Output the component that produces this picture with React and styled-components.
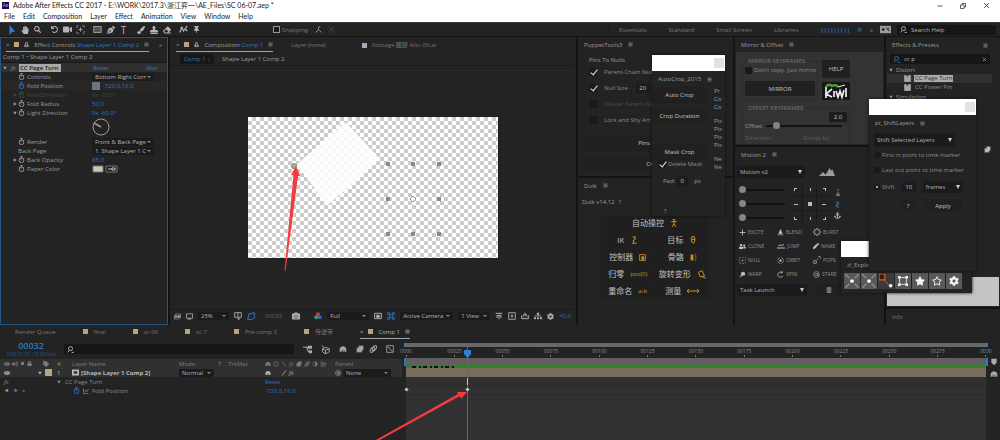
import React from 'react'
import styled, { createGlobalStyle } from 'styled-components'
import {
    FaHandPaper, FaSearch, FaUndo, FaVideo, FaPenNib, FaPaintBrush, FaStamp, FaEraser, FaThumbtack,
    FaCamera, FaCog, FaStar, FaRegStar, FaAnchor, FaTrashAlt, FaEye, FaVolumeUp, FaLock, FaUnlockAlt,
    FaTag, FaSitemap, FaUserFriends, FaPen, FaRegImages, FaDesktop,
} from 'react-icons/fa'

const GlobalStyle = createGlobalStyle`
    * { box-sizing: border-box; }
    body {
        margin: 0;
        background: #141414;
        color: #9c9c9c;
        font: 6px/8px "Open Sans", "Noto Sans CJK SC", sans-serif;
        overflow: hidden;
    }
    button, input, select { font: inherit; color: inherit; margin: 0; padding: 0; border: 0; background: none; border-radius: 0; }
    svg { display: block; flex: none; }
`

const Page = styled.div`
    position: relative;
    display: flex;
    flex-direction: column;
    min-height: 100vh;
`

/* title + menu */
const TopBar = styled.header`
    background: #fff;
    color: #222;
    display: grid;
    grid-template-columns: 1fr auto;
    height: 22px;
    font: 7px/11px Lato, "Noto Sans CJK SC", sans-serif;
`
const TitleText = styled.div`
    display: flex;
    align-items: center;
    gap: 4px;
    padding-left: 2px;
    white-space: nowrap;
`
const AppMark = styled.span`
    width: 7px;
    height: 7px;
    background: #1f0740;
    color: #b49aff;
    font-size: 5px;
    line-height: 6px;
    text-align: center;
`
const MenuBar = styled.nav`
    display: flex;
    gap: 8px;
    padding-left: 4px;
`
const WindowButtons = styled.div`
    display: flex;
    gap: 17px;
    padding: 0 10px 0 0;
    align-items: center;
`
const PlainButton = styled.button`
    display: flex;
    align-items: center;
    justify-content: center;
`

/* toolbar */
const Toolbar = styled.div`
    display: flex;
    align-items: center;
    height: 14px;
    background: #232323;
    border-top: 1px solid #3c3c3c;
    padding: 0 4px 0 5px;
    gap: 4px;
`
const ToolGroup = styled.div`
    display: flex;
`
const Tool = styled.button`
    width: 13px;
    height: 12px;
    display: flex;
    align-items: center;
    justify-content: center;
    color: ${p => p.$color || '#b4b4b4'};
    font-size: 10px;
`
const SnapLabel = styled.label`
    display: flex;
    align-items: center;
    gap: 2px;
    margin-left: 66px;
    color: #777;
`
const Workspaces = styled.nav`
    display: flex;
    align-items: center;
    gap: 22px;
    margin-left: auto;
    border-left: 1px solid #1a1a1a;
    padding-left: 10px;
    color: #777;
`
const SearchBox = styled.label`
    display: flex;
    align-items: center;
    gap: 4px;
    background: #161616;
    height: 10px;
    padding: 0 3px;
    flex: ${p => p.$fixed ? 'none' : 1};
    width: ${p => p.$w ? p.$w + 'px' : 'auto'};
    margin: ${p => p.$m || 0};
    color: #b8b8b8;
    input { flex: 1; min-width: 0; }
    input::placeholder { color: #b8b8b8; opacity: 1; }
`

/* panels */
const Workspace = styled.main`
    display: grid;
    grid-template-columns: 168px 1fr 155px 149px 114px;
    gap: 2px;
    height: 287px;
    padding-top: 1px;
`
const Column = styled.div`
    display: flex;
    flex-direction: column;
    gap: 2px;
    min-width: 0;
`
const Panel = styled.section`
    background: #232323;
    border: 1px solid ${p => p.$active ? '#24557f' : '#232323'};
    display: flex;
    flex-direction: column;
    min-width: 0;
    overflow: hidden;
    flex: ${p => p.$h ? 'none' : 1};
    height: ${p => p.$h ? p.$h + 'px' : 'auto'};
`
const PanelHead = styled.div`
    display: flex;
    flex: none;
    align-items: center;
    justify-content: space-between;
    height: 14px;
    padding: 0 5px;
    white-space: nowrap;
`
const Tab = styled.div`
    display: flex;
    align-items: center;
    gap: ${p => p.$gap || 6}px;
    height: 14px;
    color: ${p => p.$color || '#9c9c9c'};
    border-bottom: 1px solid ${p => p.$on ? '#a0a0a0' : 'transparent'};
`
const Blue = styled.span`
    color: ${p => p.$dim ? '#1d4a78' : '#2c78c4'};
`
const Grey = styled.span`
    color: #a0a0a0;
`
const Swatch = styled.i`
    width: ${p => p.$s || 5}px;
    height: ${p => p.$s || 5}px;
    background: ${p => p.$c || '#b8a483'};
    flex: none;
`
const Select = styled.select`
    appearance: none;
    background: #1b1b1b;
    color: #b4b4b4;
    height: ${p => p.$h || 8}px;
    padding: 0 8px 0 3px;
    width: 100%;
    min-width: 0;
`
const SelectBox = styled.span`
    position: relative;
    display: flex;
    align-items: center;
    width: ${p => p.$w}px;
    &::after {
        content: '';
        position: absolute;
        right: 3px;
        border: 2px solid transparent;
        border-top: ${p => p.$solid ? '4px solid #ccc' : '2px solid #888'};
        border-bottom: 0;
    }
`
const Tick = styled.input`
    appearance: none;
    position: relative;
    flex: none;
    width: ${p => p.$s || 8}px;
    height: ${p => p.$s || 8}px;
    background: #191919;
    border: ${p => p.$line ? '1px solid #999' : '0'};
    border-radius: ${p => p.type === 'radio' ? '50%' : '0'};
    &[type='checkbox']:checked::after {
        content: '';
        position: absolute;
        left: 3px;
        top: 0;
        width: 3px;
        height: 6px;
        border: solid #e4e4e4;
        border-width: 0 1px 1px 0;
        transform: rotate(38deg);
    }
    &[type='radio']:checked::after {
        content: '';
        position: absolute;
        inset: 2px;
        background: #ddd;
        border-radius: 50%;
    }
`
const Range = styled.input`
    appearance: none;
    width: ${p => p.$w}px;
    height: 8px;
    &::-webkit-slider-runnable-track { height: 2px; background: #131313; }
    &::-webkit-slider-thumb {
        appearance: none;
        width: 7px;
        height: 7px;
        margin-top: -3px;
        border-radius: 50%;
        background: #858585;
    }
`
const FlatButton = styled.button`
    background: ${p => p.$bg || '#202020'};
    color: #c4c4c4;
    height: ${p => p.$h || 14}px;
    width: ${p => p.$w ? p.$w + 'px' : 'auto'};
    display: flex;
    align-items: center;
    justify-content: center;
    gap: 6px;
    white-space: nowrap;
`

/* effect controls */
const Crumb = styled.div`
    height: 11px;
    padding: 1px 2px;
    border-bottom: 1px solid #191919;
`
const EffectHead = styled.div`
    display: grid;
    grid-template-columns: 8px 8px 74px 1fr auto;
    align-items: center;
    height: 9px;
    background: #303030;
    padding: 0 10px 0 2px;
`
const EffectName = styled.b`
    background: #a8a8a8;
    color: #222;
    font-weight: 600;
    width: 42px;
    padding: 0 1px;
    line-height: 8px;
    white-space: nowrap;
`
const PropRow = styled.div`
    display: grid;
    grid-template-columns: 17px 9px 65px 1fr;
    align-items: center;
    height: ${p => p.$tall ? 20 : 9}px;
    color: ${p => p.$dim ? '#484848' : '#9c9c9c'};
    background: ${p => p.$warm ? '#2a2623' : 'none'};
`
const ArrowCell = styled.span`
    display: flex;
    justify-content: flex-end;
    padding-right: 1px;
`
const PropLabel = styled.span`
    white-space: nowrap;
    grid-column: ${p => p.$wide ? 'span 2' : 'auto'};
`
const Values = styled.span`
    display: flex;
    align-items: center;
    gap: 3px;
    color: ${p => p.$dim ? '#484848' : '#2c78c4'};
`

/* composition view */
const CompPath = styled.div`
    display: flex;
    flex: none;
    align-items: center;
    height: 14px;
    padding-left: 9px;
    gap: 8px;
    border-bottom: 1px solid #1a1a1a;
    white-space: nowrap;
`
const PathChip = styled.span`
    background: #171717;
    color: #2c78c4;
    width: 34px;
    padding: 1px 4px;
    display: flex;
    justify-content: space-between;
`
const Viewer = styled.div`
    flex: 1;
    display: flex;
    align-items: center;
    justify-content: center;
`
const Checker = styled.div`
    width: 250px;
    height: 141px;
    background: repeating-conic-gradient(#cbcbcb 0 25%, #fff 0 50%) 0 0 / 8px 8px;
`
const ViewBar = styled.div`
    display: flex;
    flex: none;
    align-items: center;
    gap: 5px;
    height: 15px;
    padding: 0 3px 2px;
    border-top: 1px solid #1a1a1a;
    color: #b0b0b0;
    white-space: nowrap;
`

/* script panels */
const Stack = styled.div`
    display: flex;
    flex-direction: column;
    gap: ${p => p.$gap || 0}px;
    padding: ${p => p.$pad || 0};
`
const Row = styled.div`
    display: flex;
    align-items: center;
    justify-content: ${p => p.$end ? 'flex-end' : 'flex-start'};
    gap: ${p => p.$gap || 0}px;
    height: ${p => p.$h ? p.$h + 'px' : 'auto'};
    padding: ${p => p.$pad || 0};
    color: ${p => p.$color || 'inherit'};
    white-space: nowrap;
`
const CheckRow = styled.label`
    display: flex;
    align-items: center;
    gap: ${p => p.$gap || 7}px;
    height: ${p => p.$h || 16}px;
    color: ${p => p.$dim ? '#4c4c4c' : '#8c8c8c'};
    white-space: nowrap;
`
const NumberField = styled.input`
    width: ${p => p.$w || 14}px;
    height: 10px;
    background: #1c1c1c;
    color: #c4c4c4;
    text-align: center;
`
const DuikGrid = styled.div`
    display: grid;
    grid-template-columns: 1fr 1fr;
    width: 108px;
    margin: 5px 0 0 22px;
    gap: 1px;
    background: #212121;
    button:first-child { grid-column: span 2; }
`
const DuikButton = styled.button`
    display: flex;
    align-items: center;
    justify-content: center;
    gap: 6px;
    height: 16px;
    background: #1f1f1f;
    color: #c0c0c0;
    font-size: 8px;
    svg, i { color: #c98a1c; font-style: normal; font-size: 6px; }
`
const MirrorBody = styled.div`
    background: #333;
    flex: 1;
    display: grid;
    grid-template-columns: 76px 28px;
    gap: 4px 4px;
    align-content: start;
    padding: 5px 6px 0;
`
const Group = styled.fieldset`
    border: 1px solid #2c2c2c;
    margin: 0;
    padding: 0 2px 2px;
    min-width: 0;
    grid-column: ${p => p.$wide ? 'span 2' : 'auto'};
    legend { padding: 0 2px; margin-left: 1px; color: #777; }
`
const AnchorGrid = styled.div`
    display: grid;
    grid-template-columns: repeat(3, 13px);
    grid-auto-rows: 13px;
    gap: 1px;
    background: #1a1a1a;
    button { background: #232323; display: flex; align-items: center; justify-content: center; }
`
const MotionGrid = styled.div`
    display: grid;
    grid-template-columns: 38px 36px 36px;
    grid-auto-rows: 14px;
    padding: 1px 0 3px 3px;
`
const MotionButton = styled.button`
    display: flex;
    align-items: center;
    gap: 2px;
    color: #8f8f8f;
    font-size: 5px;
    svg { color: #c0c0c0; }
`

/* effects tree */
const TreeRow = styled.div`
    display: flex;
    align-items: center;
    gap: 3px;
    height: 9px;
    padding-left: ${p => p.$depth ? 17 : 2}px;
    margin-right: 7px;
    background: ${p => p.$on ? '#303030' : 'none'};
    mark { background: ${p => p.$on ? '#aaa' : 'none'}; color: ${p => p.$on ? '#333' : '#8c8c8c'}; padding: 0 1px; line-height: 7px; }
`
const LightBlock = styled.div`
    background: #c4c4c4;
    height: 29px;
    margin-top: auto;
`
const CornerNote = styled.div`
    align-self: flex-end;
    margin: 45px 8px 0 0;
    color: #bbb;
`

/* floating windows */
const Floating = styled.section`
    position: absolute;
    left: ${p => p.$x}px;
    top: ${p => p.$y}px;
    width: ${p => p.$w}px;
    height: ${p => p.$h}px;
    background: #232323;
    box-shadow: 0 0 3px #111;
    overflow: hidden;
`
const FloatTitle = styled.div`
    background: #fff;
    height: 16px;
    display: flex;
    justify-content: flex-end;
    align-items: center;
    padding-right: 1px;
`
const FloatClose = styled.button`
    width: 10px;
    height: 10px;
    background: #e2e2e2;
`
const AutoCropBody = styled.div`
    display: grid;
    grid-template-columns: 55px 1fr;
    gap: 4px;
`
const ExplodeTool = styled.button`
    width: 16px;
    height: 16px;
    display: flex;
    align-items: center;
    justify-content: center;
    background: ${p => p.$dark ? '#3b3b3b' : '#595959'};
    color: #f4f4f4;
`

/* timeline */
const Timeline = styled.section`
    flex: 1;
    margin-top: 2px;
    background: #232323;
    display: flex;
    flex-direction: column;
`
const TimelineTabs = styled.div`
    display: flex;
    align-items: center;
    height: 14px;
    padding-left: 15px;
    gap: 27px;
    color: #777;
    white-space: nowrap;
`
const TimelineBody = styled.div`
    flex: 1;
    display: grid;
    grid-template-columns: 402px 1fr;
`
const TimelineTools = styled.div`
    display: flex;
    align-items: center;
    height: 20px;
    color: #a8a8a8;
    gap: 9px;
    padding-right: 8px;
`
const TimeCode = styled.div`
    width: 55px;
    padding-left: 7px;
    text-align: center;
    color: #2c78c4;
    font-weight: 600;
    font-size: 9px;
    line-height: 10px;
    small { display: block; font: 5px/6px Roboto, sans-serif; color: #1f5080; white-space: nowrap; }
`
const LayerTable = styled.table`
    width: 100%;
    table-layout: fixed;
    border-collapse: collapse;
    td, th { padding: 0; height: 9px; line-height: 8px; text-align: left; font-weight: 400; white-space: nowrap; overflow: hidden; }
    th { background: #303030; color: #7d7d7d; }
`
const LayerRow = styled.tr`
    background: ${p => p.$on ? '#303030' : 'none'};
    color: ${p => p.$on ? '#b8b8b8' : '#8c8c8c'};
`
const Tracks = styled.div`
    position: relative;
    margin: 4px 14px 0 4px;
    background: #313131;
    display: flex;
    flex-direction: column;
`
const Bar = styled.div`
    height: ${p => p.$h}px;
    background: ${p => p.$c};
    border-left: ${p => p.$grip ? '2px solid #2c78c4' : '0'};
    border-right: ${p => p.$grip ? '2px solid #2c78c4' : '0'};
    margin: ${p => p.$grip ? '0 -2px' : '0'};
    flex: none;
`
const Ruler = styled.div`
    display: flex;
    justify-content: space-between;
    height: 11px;
    background: #232323;
    color: #8c8c8c;
    font-size: 5px;
`
const Mark = styled.span`
    width: 0;
    display: flex;
    flex-direction: column;
    align-items: center;
    &::after { content: ''; width: 1px; height: 2px; background: #777; }
`
const TrackRow = styled.div`
    height: 9px;
    border-bottom: 1px solid #2b2b2b;
`
const Playhead = styled.div`
    position: absolute;
    left: 10.5%;
    top: 0;
    bottom: 0;
    width: 1px;
    background: #35779c;
    svg { position: absolute; left: -3px; top: 7px; }
    &::after { content: ''; position: absolute; left: 0; top: 35px; width: 1px; height: 7px; background: #b8c8d4; }
`
const Keyframe = styled.i`
    position: absolute;
    left: ${p => p.$at}%;
    top: 45px;
    width: 3px;
    height: 3px;
    margin-left: -1px;
    background: #c4c4c4;
    transform: rotate(45deg);
`
const EdgeIcons = styled.div`
    position: absolute;
    right: -12px;
    top: 15px;
    color: #aaa;
    display: flex;
    flex-direction: column;
    gap: 4px;
`
const Overlay = styled.svg`
    position: absolute;
    left: 0;
    top: 0;
    pointer-events: none;
`

const paths = {
    cursor: <path d="M3 0 L10 8 L6 8 L3 12 Z" fill="currentColor" />,
    pan: <g fill="none" stroke="currentColor"><path d="M1 4V1H4M8 1H11V4M11 8V11H8M4 11H1V8" strokeDasharray="2 1" /><path d="M6 3V9M3 6H9" /></g>,
    rect: <path d="M1 2H11V10H1Z" fill="#555" stroke="currentColor" />,
    roto: <path d="M1 10L4 3L6 8L11 1M8 5L11 8M4 3L2 4" fill="none" stroke="currentColor" strokeWidth="1.6" />,
    snap: <path d="M1 11L6 6L11 11M6 6V2M6 2L9 1" fill="none" stroke="currentColor" strokeWidth="1.3" />,
    cross: <path d="M1 1L4 4M11 1L8 4M1 11L4 8M11 11L8 8M4 6H8M6 4V8" fill="none" stroke="currentColor" strokeWidth="1.5" />,
    menu: <path d="M1 2.5H11M1 6H11M1 9.5H11" stroke="currentColor" strokeWidth="1.6" />,
    down: <path d="M1 2H11L6 11Z" fill="currentColor" />,
    right: <path d="M2 1V11L11 6Z" fill="currentColor" />,
    left: <path d="M10 1V11L1 6Z" fill="currentColor" />,
    watch: <g fill="none" stroke="currentColor" strokeWidth="1.5"><circle cx="6" cy="7.5" r="4" /><path d="M4 1H8M6 1V4M1.5 3L3 4.5M10.5 3L9 4.5M6 7.5L5 6" /></g>,
    mag: <g fill="none" stroke="currentColor" strokeWidth="1.5"><circle cx="6" cy="4.5" r="3.5" /><path d="M4 7.5L1 11M8 11H12" /></g>,
    close: <path d="M2 2L10 10M10 2L2 10" stroke="currentColor" strokeWidth="1.5" />,
    mini: <path d="M1 6H11" stroke="currentColor" strokeWidth="1.5" />,
    restore: <path d="M1 4H8V11H1ZM4 4V1H11V8H8" fill="none" stroke="currentColor" strokeWidth="1.4" />,
    preset: <path d="M1 1H4V3H8V1H11V11H1ZM3 6H5M7 6H9M3 8.5H9" fill="#999" stroke="#ccc" />,
    mask: <path d="M3 3L11 1V9L8 11H1Z" fill="none" stroke="currentColor" strokeWidth="1.5" />,
    grid: <path d="M1 1H11V8H8V11H6V1M1 8H6M1 1V8" fill="none" stroke="currentColor" strokeWidth="1.3" />,
    frame: <g fill="none" stroke="currentColor" strokeWidth="1.4"><path d="M1 2H11V10H1Z" /><path d="M4 5H8V8H4Z" fill="currentColor" /></g>,
    fast: <g fill="none" stroke="currentColor" strokeWidth="1.3"><path d="M1 1H11V11H1Z" /><path d="M7 3L4 6H8L5 9" /></g>,
    alpha: <path d="M1 1H4V4H8V1H11V4H8V8H11V11H8V8H4V11H1V8H4V4H1Z" fill="none" stroke="currentColor" strokeWidth="1.2" />,
    rgb: <g><circle cx="6" cy="3.5" r="3" fill="#c43a35" /><circle cx="3.5" cy="8" r="3" fill="#3f9f47" /><circle cx="8.5" cy="8" r="3" fill="#3c62c4" /></g>,
    pixel: <path d="M1 2H11M3 5H9M6 5V11M3 5V9M9 5V9" fill="none" stroke="currentColor" strokeWidth="1.5" />,
    tray: <path d="M1 5V10H11V5M4 7V4H8V7M6 4V1" fill="none" stroke="currentColor" strokeWidth="1.5" />,
    chart: <path d="M1 11H11M1 1V11M3 8L6 4L8 7L11 2" fill="none" stroke="currentColor" strokeWidth="1.4" />,
    flow: <g><path d="M0 3H5L7 9H9" fill="none" stroke="currentColor" strokeWidth="1.4" /><path d="M6 1H12V5H6ZM8 7H12V11H8Z" fill="currentColor" /></g>,
    cube: <path d="M6 3L11 5V9L6 12L2 9V5ZM2 5L6 7L11 5M6 7V12M1 1L4 3" fill="none" stroke="currentColor" strokeWidth="1.2" />,
    shy: <path d="M1 10V6Q2 2 6 2Q10 2 11 6V10H8V7H7V10H5V7H4V10Z" fill="currentColor" />,
    blend: <path d="M4 1H11V8H9V11H1V4H4Z" fill="currentColor" stroke="#555" />,
    blur: <g fill="none" stroke="currentColor" strokeWidth="1.5"><ellipse cx="5" cy="7" rx="2.5" ry="4.5" transform="rotate(35 5 7)" /><ellipse cx="8" cy="5" rx="2.5" ry="4.5" transform="rotate(35 8 5)" /></g>,
    graph: <path d="M1 1H11V11H1ZM2 3Q5 3 6 6Q7 9 10 9" fill="none" stroke="currentColor" strokeWidth="1.2" />,
    slash: <path d="M10 1L2 11" stroke="currentColor" strokeWidth="1.5" />,
    back: <path d="M2 1L10 11" stroke="currentColor" strokeWidth="1.5" />,
    half: <g><circle cx="6" cy="6" r="4.5" fill="none" stroke="currentColor" /><path d="M6 1.5A4.5 4.5 0 0 1 6 10.5Z" fill="currentColor" /></g>,
    dot: <circle cx="6" cy="6" r="4" fill="currentColor" />,
    spiral: <g fill="none" stroke="currentColor"><circle cx="6" cy="6" r="5" /><circle cx="6" cy="6" r="2" /><path d="M8 4V8H10" /></g>,
    comp: <path d="M0 1H12V11H0ZM3 4V8H9V4Z" fill="currentColor" fillRule="evenodd" />,
    sync: <g><path d="M0 2H12V10H0Z" fill="currentColor" /><circle cx="3.5" cy="6" r="1.5" fill="#232323" /><path d="M7 4L10 8M9 4V6" stroke="#232323" /></g>,
    diamond: <path d="M6 1L11 6L6 11L1 6Z" fill="currentColor" />,
    mountains: <path d="M0 9L3 6L5 8L8 3L9 5L10 4L12 9Z" fill="currentColor" />,
    plus: <path d="M6 1V11M1 6H11" stroke="currentColor" strokeWidth="1.5" />,
    cone: <path d="M6 1L9 8H3ZM1 10H11" fill="currentColor" stroke="currentColor" />,
    burst: <path d="M6 0V3M6 9V12M0 6H3M9 6H12M2 2L4 4M10 2L8 4M2 10L4 8M10 10L8 8" stroke="currentColor" strokeWidth="1.6" />,
    jump: <path d="M0 9H12M2 6L5 4L7 6L10 3" fill="none" stroke="currentColor" strokeWidth="1.5" />,
    nul: <g fill="none" stroke="currentColor"><path d="M1 1H11V11H1Z" strokeDasharray="2 2.5" /><circle cx="6" cy="6" r="1" /></g>,
    orbit: <g fill="none" stroke="currentColor"><circle cx="6" cy="6" r="5" strokeDasharray="6 2" /><circle cx="6" cy="6" r="1.5" fill="currentColor" /></g>,
    pops: <path d="M1 7V11H5V7ZM8 1H11V4M6 6L8 4" fill="none" stroke="currentColor" />,
    warp: <path d="M1 11L4 6L3 3L9 1L11 7L6 8Z" fill="currentColor" />,
    spin: <path d="M9 3A4.5 4.5 0 1 0 10 8M9 0V3H6" fill="none" stroke="currentColor" strokeWidth="1.3" />,
    man: <path d="M6 1V7M2 4H10M6 7L3 12M6 7L9 12M4 1H8" fill="none" stroke="currentColor" strokeWidth="1.5" />,
    leg: <path d="M4 2Q9 0 8 4L5 7L6 11M3 11H10" fill="none" stroke="currentColor" strokeWidth="1.6" />,
    target: <path d="M4 1H8L9 6L7 11L4 9ZM4 5H9" fill="none" stroke="currentColor" strokeWidth="1.5" />,
    control: <g><path d="M1 1H11V11H1Z" fill="none" stroke="currentColor" strokeWidth="1.5" /><path d="M4 4H9V10H4Z" fill="currentColor" /></g>,
    bone: <g><path d="M1 1H6V11H1Z" fill="currentColor" /><path d="M8 1H10V11H8" fill="none" stroke="currentColor" /></g>,
    morph: <path d="M2 3L7 1L10 8L4 9ZM7 9L12 11" fill="none" stroke="currentColor" strokeWidth="1.3" />,
    ruler: <path d="M0 6H12M2 4L0 6L2 8M10 4L12 6L10 8" fill="none" stroke="currentColor" />,
    flask: <path d="M4 1H8M6 1V5L9 10H3L6 5" fill="#777" stroke="#777" />,
    link: <path d="M4 1L8 4L4 8L8 11" fill="none" stroke="#2c8ac4" strokeWidth="1.8" />,
    explode: <g stroke="#8c8c8c" strokeWidth="1"><path d="M1 1L4 4M11 1L8 4M1 11L4 8M11 11L8 8" /><circle cx="6" cy="6" r="1.4" fill="#fff" stroke="none" /></g>,
    explodeBox: <g><path d="M0 0H5V5H0Z" fill="#3a1c08" stroke="#d26a1c" /><path d="M5 6L9 10" stroke="#888" strokeWidth="0.7" /><circle cx="10" cy="10" r="1.5" fill="#fff" /></g>,
    bounds: <g fill="currentColor"><path d="M2 2H10V10H2Z" fill="none" stroke="currentColor" /><path d="M0 0H3V3H0ZM9 0H12V3H9ZM0 9H3V12H0ZM9 9H12V12H9Z" /></g>,
    marker: <path d="M2 1H10V7L6 11L2 7Z" fill="currentColor" />,
}

function Glyph({ name, size = 7 }) {
    return <svg width={size} height={size} viewBox="0 0 12 12">{paths[name]}</svg>
}

function Drop({ label, value, w, h, solid }) {
    return (
        <SelectBox $w={w} $solid={solid}>
            <Select aria-label={label} defaultValue={value} $h={h}><option>{value}</option></Select>
        </SelectBox>
    )
}

function EffectProp({ label, arrow, watch = true, blue, dim, warm, tall, children }) {
    const Tint = blue ? Blue : dim ? 'span' : Grey
    return (
        <PropRow $dim={dim} $warm={warm} $tall={tall}>
            <ArrowCell>{arrow && <Glyph name={arrow} size={4} />}</ArrowCell>
            {watch && <Tint>{label && <Glyph name="watch" />}</Tint>}
            <PropLabel $wide={!watch}>{label}</PropLabel>
            <Values $dim={dim}>{children}</Values>
        </PropRow>
    )
}

function EffectControls() {
    return (
        <Panel $active>
            <PanelHead>
                <Tab $on $gap={5}>
                    <span>×</span><Swatch /><FaUnlockAlt size={5} />
                    <span>Effect Controls <Blue>Shape Layer 1 Comp 2</Blue></span>
                    <Glyph name="menu" size={5} />
                </Tab>
                <span>»</span>
            </PanelHead>
            <Crumb>Comp 1 • Shape Layer 1 Comp 2</Crumb>
            <EffectHead>
                <Glyph name="down" size={4} /><i>fx</i><EffectName>CC Page Turn</EffectName>
                <Blue>Reset</Blue><Blue>Abo</Blue>
            </EffectHead>
            <EffectProp label="Controls"><Drop label="Controls" value="Bottom Right Corner" w={62} /></EffectProp>
            <EffectProp label="Fold Position" blue warm>
                <Swatch $s={8} $c="#6c7580" /><span>-720.0,16.0</span>
            </EffectProp>
            <EffectProp label="Fold Direction" arrow="right" dim>0x -13.0°</EffectProp>
            <EffectProp label="Fold Radius" arrow="right">50.0</EffectProp>
            <EffectProp label="Light Direction" arrow="down">0x -60.0°</EffectProp>
            <EffectProp tall>
                <svg width="18" height="18" viewBox="0 0 18 18" fill="none" stroke="#9c9c9c">
                    <circle cx="9" cy="9" r="8" /><path d="M9 9L2 5" strokeWidth="1.5" />
                </svg>
            </EffectProp>
            <EffectProp label="Render"><Drop label="Render" value="Front & Back Page" w={62} /></EffectProp>
            <EffectProp label="Back Page" watch={false}><Drop label="Back Page" value="1. Shape Layer 1 Comp 2" w={62} /></EffectProp>
            <EffectProp label="Back Opacity" arrow="right">85.0</EffectProp>
            <EffectProp label="Paper Color">
                <svg width="26" height="8" viewBox="0 0 26 8">
                    <path d="M1 1H11V7H1Z" fill="#c8c8b4" stroke="#777" />
                    <path d="M14 1H25V7H14Z" fill="#1c1c1c" stroke="#777" /><path d="M16 4H20M20 3H23V5H20Z" stroke="#ccc" />
                </svg>
            </EffectProp>
        </Panel>
    )
}

function Composition() {
    return (
        <Panel>
            <PanelHead>
                <Row $gap={18}>
                    <Tab $on $gap={5}>
                        <span>×</span><Swatch /><FaUnlockAlt size={5} />
                        <span>Composition <Blue>Comp 1</Blue></span><Glyph name="menu" size={5} />
                    </Tab>
                    <Tab $color="#777">Layer (none)</Tab>
                    <Row $pad="0 0 0 18px" $gap={5} $color="#777"><Swatch $c="#aaa8bc" />Footage 图层 4/sc-06.ai</Row>
                </Row>
            </PanelHead>
            <CompPath><PathChip>Comp 1 <span>‹</span></PathChip><span>Shape Layer 1 Comp 2</span></CompPath>
            <Viewer>
                <Checker>
                    <svg width="250" height="141" viewBox="0 0 250 141">
                        <path d="M98 5L132 42L79 89L49 47Z" fill="#fff" opacity="0.88" />
                        <circle cx="46" cy="49" r="2.5" fill="#b5ab9c" stroke="#8d8578" />
                        {[47, 82, 117].map(y => [140, 165, 191].map(x => (
                            x === 165 && y === 82
                                ? <path key={x} d="M165 79L168 82L165 85L162 82Z" fill="#fff" stroke="#989878" />
                                : <rect key={x} x={x - 2} y={y - 2} width="4" height="4" fill="#8c8c70" />
                        )))}
                    </svg>
                </Checker>
            </Viewer>
            <ViewBar>
                <FaRegImages size={7} /><FaDesktop size={7} /><Drop label="Zoom" value="25%" w={31} />
                <Glyph name="grid" size={8} /><Blue><Glyph name="mask" size={8} /></Blue>
                <Row $pad="0 5px" $color="#666">00032</Row>
                <FaCamera size={8} /><Row $pad="0 0 0 9px"><Glyph name="rgb" size={8} /></Row>
                <Drop label="Resolution" value="Full" w={42} />
                <Glyph name="frame" size={8} /><Blue><Glyph name="alpha" size={8} /></Blue>
                <Drop label="View camera" value="Active Camera" w={53} />
                <Drop label="View layout" value="1 View" w={32} />
                <Glyph name="pixel" size={8} /><Glyph name="fast" size={8} /><Glyph name="tray" size={8} />
                <FaSitemap size={8} /><FaCog size={7} /><Blue>+0.0</Blue>
            </ViewBar>
        </Panel>
    )
}

function SimpleHead({ title }) {
    return (
        <PanelHead>
            <Tab>{title}<Glyph name="menu" size={5} /></Tab>
        </PanelHead>
    )
}

const duik = [
    ['自动操控', <Glyph name="man" size={8} />],
    ['IK', <Glyph name="leg" size={8} />], ['目标', <Glyph name="target" size={8} />],
    ['控制器', <Glyph name="control" size={7} />], ['骨骼', <Glyph name="bone" size={7} />],
    ['归零', <i>pos(0)</i>], ['旋转变形', <Glyph name="morph" size={9} />],
    ['重命名', <i>a›b</i>], ['测量', <Glyph name="ruler" size={12} />],
]

function Puppet() {
    return (
        <Column>
            <Panel $h={139}>
                <SimpleHead title="PuppetTools3" />
                <Stack $pad="4px 5px 0 10px">
                    <span>Pins To Nulls</span>
                    <Stack>
                        <CheckRow><Tick type="checkbox" defaultChecked />Parent-Chain Nulls</CheckRow>
                        <Row $gap={8}>
                            <CheckRow><Tick type="checkbox" defaultChecked />Null Size</CheckRow>
                            <NumberField aria-label="Null size" defaultValue="20" />
                        </Row>
                        <CheckRow $dim><Tick type="checkbox" />Master Parent Null</CheckRow>
                        <CheckRow><Tick type="checkbox" />Lock and Shy Art</CheckRow>
                    </Stack>
                </Stack>
                <Stack $gap={5} $pad="7px 5px 0">
                    <FlatButton $h={16}>Pins to Nulls</FlatButton>
                    <FlatButton $h={16}>Create</FlatButton>
                </Stack>
            </Panel>
            <Panel>
                <SimpleHead title="Duik" />
                <Row $pad="5px 3px 4px" $gap={4}><span>Duik v14.12</span><button>?</button></Row>
                <DuikGrid>
                    {duik.map(([label, icon]) => <DuikButton key={label}>{label}{icon}</DuikButton>)}
                </DuikGrid>
            </Panel>
        </Column>
    )
}

const motionButtons = [
    ['EXCITE', <Glyph name="plus" />], ['BLEND', <Glyph name="cone" />], ['BURST', <Glyph name="burst" size={8} />],
    ['CLONE', <FaUserFriends size={7} />], ['JUMP', <Glyph name="jump" size={8} />], ['NAME', <FaPen size={6} />],
    ['NULL', <Glyph name="nul" />], ['ORBIT', <Glyph name="orbit" />], ['POPS', <Glyph name="pops" size={8} />],
    ['WARP', <Glyph name="warp" />], ['SPIN', <Glyph name="spin" />], ['STARE', <Glyph name="spiral" />],
]
const anchors = ['M2 5V2H5V3H3V5Z', 'M4 2H5V5H4Z', 'M3 2H6V5H5V3H3Z', 'M2 4H6V5H2Z', 'M2 2H6V6H2Z', 'M2 4H6V5H2Z', 'M2 3H3V5H5V6H2Z', 'M4 3H5V6H4Z', 'M5 3H6V6H3V5H5Z']

function Mirror() {
    return (
        <Column>
            <Panel $h={108}>
                <SimpleHead title="Mirror & Offset" />
                <MirrorBody>
                    <Group>
                        <legend>MIRROR KEYFRAMES</legend>
                        <CheckRow $h={10} $gap={2}><Tick type="checkbox" $s={7} />Don't copy, just mirror</CheckRow>
                        <Stack $pad="6px 0 0"><FlatButton $h={15}>MIRROR</FlatButton></Stack>
                    </Group>
                    <Stack $gap={4} $pad="3px 0 0">
                        <FlatButton $h={18}>HELP</FlatButton>
                        <FlatButton $h={18} $bg="#171717" aria-label="Kiwi">
                            <svg width="26" height="18" viewBox="0 0 26 18" fill="none" stroke="#eee" strokeWidth="1.7">
                                <path d="M3 5V16M9 7L3 12L9 15M11 9V15M13 9L15 15L17 9L19 15L21 8M23 6V15" />
                                <path d="M3 5Q6 1 9 4Q13 2 15 5" stroke="#4b9a33" strokeWidth="2.5" />
                                <path d="M15 5L22 3" strokeWidth="1" />
                            </svg>
                        </FlatButton>
                    </Stack>
                    <Group $wide>
                        <legend>OFFSET KEYFRAMES</legend>
                        <Row $end><NumberField aria-label="Offset value" defaultValue="2.0" $w={18} /></Row>
                        <Row as="label" $gap={4}>Offset <Range type="range" $w={76} min="0" max="20" defaultValue="2" /></Row>
                        <Row $gap={31} $pad="4px 0 0" $color="#606060"><span>Direction:</span><span>Group by:</span></Row>
                    </Group>
                </MirrorBody>
            </Panel>
            <Panel>
                <SimpleHead title="Motion 2" />
                <Row $gap={14} $pad="2px 1px 3px"><Drop label="Version" value="Motion v2" w={68} h={12} solid /><Glyph name="mountains" size={16} /></Row>
                <Row $gap={4} $pad="0 3px">
                    <Stack $gap={6}>
                        {[1, 2, 3].map(n => <Range key={n} aria-label={'Ease ' + n} type="range" $w={46} defaultValue="0" />)}
                    </Stack>
                    <AnchorGrid>
                        {anchors.map((d, n) => (
                            <button key={n} aria-label={'Anchor ' + n}>
                                <svg width="8" height="8" viewBox="0 0 8 8"><path d={d} fill="#bbb" /></svg>
                            </button>
                        ))}
                    </AnchorGrid>
                    <Stack $gap={4}><Glyph name="flask" size={8} /><Glyph name="link" size={7} /><FaAnchor size={7} color="#ccc" /></Stack>
                </Row>
                <MotionGrid>
                    {motionButtons.map(([label, icon]) => <MotionButton key={label}>{icon}{label}</MotionButton>)}
                </MotionGrid>
                <Row $gap={8} $pad="0 1px">
                    <Drop label="Task" value="Task Launch" w={70} h={12} solid />
                    <FlatButton aria-label="Delete" $w={28} $h={12}><FaTrashAlt size={6} color="#888" /></FlatButton>
                </Row>
            </Panel>
        </Column>
    )
}

function Effects() {
    return (
        <Column>
            <Panel $h={270}>
                <PanelHead><Tab>Effects & Presets</Tab><Row $pad="0 6px 0 0"><Glyph name="menu" size={5} /></Row></PanelHead>
                <SearchBox $m="2px 9px 1px 3px" $fixed>
                    <Blue><Glyph name="mag" /></Blue><input aria-label="Search effects" defaultValue="cc p" /><Glyph name="close" size={5} />
                </SearchBox>
                <TreeRow><Glyph name="down" size={4} />Distort</TreeRow>
                <TreeRow $depth $on><Glyph name="preset" /><mark>CC Page Turn</mark></TreeRow>
                <TreeRow $depth><Glyph name="preset" /><mark>CC Power Pin</mark></TreeRow>
                <TreeRow><Glyph name="down" size={4} />Simulation</TreeRow>
                <CornerNote><Glyph name="blend" /></CornerNote>
                <LightBlock />
            </Panel>
            <Panel><PanelHead><Tab $color="#777">Info</Tab></PanelHead></Panel>
        </Column>
    )
}

function Switches() {
    return (
        <Row $gap={2}>
            <Glyph name="shy" size={6} /><Glyph name="burst" size={6} /><Glyph name="back" size={6} /><i>fx</i>
            <Glyph name="blend" size={6} /><Glyph name="blur" size={6} /><Glyph name="half" size={6} /><Glyph name="cube" size={6} />
        </Row>
    )
}

const tabs = ['final', 'sc-06', 'sc 7', 'Pre-comp 3', '传送带']
const marks = ['0000', '00025', '00050', '00075', '00100', '00125', '00150', '00175', '00200', '00225', '00250', '00275', '0030']

function TimelinePanel() {
    return (
        <Timeline>
            <TimelineTabs>
                <span>Render Queue</span>
                {tabs.map(name => <Tab key={name} $color="#777"><Swatch />{name}</Tab>)}
                <Tab $on $gap={5} $color="#b0b0b0"><span>×</span><Swatch />Comp 1<Glyph name="menu" size={5} /></Tab>
            </TimelineTabs>
            <TimelineBody>
                <div>
                    <TimelineTools>
                        <TimeCode>00032<small>0:00:01:07 (25.00 fps)</small></TimeCode>
                        <SearchBox><Glyph name="mag" /><input aria-label="Search layers" /></SearchBox>
                        <Glyph name="flow" size={9} /><Glyph name="cube" size={9} /><Glyph name="shy" size={8} />
                        <Row $gap={5}><Glyph name="blend" size={8} /><Glyph name="blur" size={8} /></Row>
                        <Glyph name="graph" size={8} />
                    </TimelineTools>
                    <LayerTable>
                        <colgroup>
                            <col width="38" /><col width="19" /><col width="15" /><col /><col width="39" /><col width="10" />
                            <col width="37" /><col width="70" /><col width="67" />
                        </colgroup>
                        <thead>
                            <tr>
                                <th><Row $gap={2} $pad="0 0 0 4px"><FaEye size={6} /><FaVolumeUp size={6} /><Glyph name="dot" size={5} /><FaLock size={5} /></Row></th>
                                <th><Row $pad="0 0 0 5px"><FaTag size={6} /></Row></th>
                                <th>#</th><th>Layer Name</th><th>Mode</th><th>T</th><th>TrkMat</th><th><Switches /></th><th>Parent</th>
                            </tr>
                        </thead>
                        <tbody>
                            <LayerRow $on>
                                <td><Row $pad="0 0 0 4px"><FaEye size={6} /></Row></td>
                                <td><Row $gap={3}><Glyph name="down" size={4} /><Swatch $s={7} /></Row></td>
                                <td>1</td>
                                <td><Row $gap={2}><Glyph name="comp" /><b>[Shape Layer 1 Comp 2]</b></Row></td>
                                <td><Drop label="Mode" value="Normal" w={35} /></td>
                                <td /><td />
                                <td><Row $gap={10}><Glyph name="shy" size={6} /><Row $gap={2}><Glyph name="slash" size={6} /><i>fx</i></Row></Row></td>
                                <td><Row $gap={2}><Glyph name="spiral" size={6} /><Drop label="Parent" value="None" w={48} /></Row></td>
                            </LayerRow>
                            <LayerRow>
                                <td><Row $pad="0 0 0 4px"><i>fx</i></Row></td><td />
                                <td colSpan={5}><Row $gap={4}><Glyph name="down" size={4} />CC Page Turn</Row></td>
                                <td><Blue>Reset</Blue></td><td><Blue $dim>...</Blue></td>
                            </LayerRow>
                            <LayerRow>
                                <td colSpan={3}>
                                    <Row $gap={4} $pad="0 0 0 4px"><Glyph name="left" size={5} /><Blue><Glyph name="diamond" size={5} /></Blue><Row $color="#555"><Glyph name="right" size={4} /></Row></Row>
                                </td>
                                <td colSpan={4}><Row $gap={3} $pad="0 0 0 1px"><Blue><Glyph name="watch" /></Blue><Glyph name="chart" size={6} />Fold Position</Row></td>
                                <td><Blue>-720.0,16.0</Blue></td><td />
                            </LayerRow>
                        </tbody>
                    </LayerTable>
                </div>
                <Tracks>
                    <Bar $h={4} $c="#686868" $grip />
                    <Ruler>{marks.map(m => <Mark key={m}>{m}</Mark>)}</Ruler>
                    <Bar $h={8} $c="#625e5e" $grip />
                    <svg width="100%" height="2"><rect width="100%" height="2" fill="#228b24" /><path d="M6 1H50" stroke="#111" strokeWidth="2" strokeDasharray="4 3 2 2" /></svg>
                    <Bar $h={9} $c="#786c5e" />
                    <TrackRow /><TrackRow />
                    <Playhead><svg width="7" height="8" viewBox="0 0 7 8"><path d="M0 0H7V4L3.5 8L0 4Z" fill="#2f7fd6" /></svg></Playhead>
                    <Keyframe $at={0} /><Keyframe $at={10.5} />
                    <EdgeIcons><Glyph name="marker" size={8} /><Glyph name="shy" size={8} /></EdgeIcons>
                </Tracks>
            </TimelineBody>
        </Timeline>
    )
}

export default function App() {
    return (
        <Page>
            <GlobalStyle />
            <TopBar>
                <TitleText><AppMark>Ae</AppMark>Adobe After Effects CC 2017 - E:\WORK\2017.3\浙江弈一\AE_Files\SC 06-07.aep *</TitleText>
                <WindowButtons>
                    <PlainButton aria-label="Minimize"><Glyph name="mini" size={6} /></PlainButton>
                    <PlainButton aria-label="Restore"><Glyph name="restore" size={6} /></PlainButton>
                    <PlainButton aria-label="Close"><Glyph name="close" size={7} /></PlainButton>
                </WindowButtons>
                <MenuBar>
                    {['File', 'Edit', 'Composition', 'Layer', 'Effect', 'Animation', 'View', 'Window', 'Help'].map(m => <PlainButton key={m}>{m}</PlainButton>)}
                </MenuBar>
            </TopBar>
            <Toolbar>
                <ToolGroup>
                    <Tool aria-label="Select" $color="#2f7fd6"><Glyph name="cursor" size={10} /></Tool>
                    <Tool aria-label="Hand"><FaHandPaper size={8} /></Tool>
                    <Tool aria-label="Zoom"><FaSearch size={7} /></Tool>
                </ToolGroup>
                <ToolGroup>
                    <Tool aria-label="Rotate"><FaUndo size={7} /></Tool>
                    <Tool aria-label="Camera"><FaVideo size={9} /></Tool>
                    <Tool aria-label="Pan behind"><Glyph name="pan" size={9} /></Tool>
                </ToolGroup>
                <ToolGroup>
                    <Tool aria-label="Shape"><Glyph name="rect" size={9} /></Tool>
                    <Tool aria-label="Pen"><FaPenNib size={8} /></Tool>
                    <Tool>T</Tool>
                </ToolGroup>
                <ToolGroup>
                    <Tool aria-label="Brush"><FaPaintBrush size={8} /></Tool>
                    <Tool aria-label="Stamp"><FaStamp size={8} /></Tool>
                    <Tool aria-label="Eraser"><FaEraser size={8} /></Tool>
                </ToolGroup>
                <ToolGroup>
                    <Tool aria-label="Roto"><Glyph name="roto" size={9} /></Tool>
                    <Tool aria-label="Pin"><FaThumbtack size={7} /></Tool>
                </ToolGroup>
                <SnapLabel><Tick type="checkbox" $line $s={7} />Snapping</SnapLabel>
                <ToolGroup><Tool aria-label="Snap edges"><Glyph name="snap" /></Tool><Tool aria-label="Snap features" $color="#24557f"><Glyph name="cross" /></Tool></ToolGroup>
                <Workspaces>
                    <span>Essentials</span><span>Standard</span><span>Small Screen</span><span>Libraries</span>
                    <Row $gap={7} $color="#2c78c4"><b>|||||||||</b><Glyph name="menu" size={5} /></Row>
                </Workspaces>
                <Row $gap={7} $pad="0 2px 0 4px"><span>»</span><Glyph name="sync" size={11} /></Row>
                <SearchBox $w={99} $fixed><Glyph name="mag" /><input aria-label="Search help" placeholder="Search Help" /></SearchBox>
            </Toolbar>
            <Workspace>
                <EffectControls />
                <Composition />
                <Puppet />
                <Mirror />
                <Effects />
            </Workspace>
            <TimelinePanel />

            <Floating $x={841} $y={241} $w={131} $h={52}>
                <FloatTitle />
                <Row $h={15} $pad="0 6px">zl_Explode</Row>
                <Row $gap={1} $pad="1px 3px">
                    <ExplodeTool aria-label="Explode in"><Glyph name="explode" size={16} /></ExplodeTool>
                    <ExplodeTool aria-label="Explode out"><Glyph name="explode" size={16} /></ExplodeTool>
                    <ExplodeTool aria-label="Split" $dark><Glyph name="explodeBox" size={14} /></ExplodeTool>
                    <ExplodeTool aria-label="Bounds"><Glyph name="bounds" size={10} /></ExplodeTool>
                    <ExplodeTool aria-label="Star"><FaStar size={10} /></ExplodeTool>
                    <ExplodeTool aria-label="Outline star"><FaRegStar size={10} /></ExplodeTool>
                    <ExplodeTool aria-label="Settings"><FaCog size={10} /></ExplodeTool>
                </Row>
            </Floating>

            <Floating $x={652} $y={55} $w={73} $h={161}>
                <FloatTitle><FloatClose aria-label="Close AutoCrop" /></FloatTitle>
                <Row $h={16} $gap={6} $pad="0 6px">AutoCrop_2015<Glyph name="menu" size={5} /></Row>
                <AutoCropBody>
                    <Stack>
                        <FlatButton $h={16}>Auto Crop</FlatButton>
                        <Stack $pad="5px 0 0"><FlatButton $h={16}>Crop Duration</FlatButton></Stack>
                        <Stack $pad="20px 0 0"><FlatButton $h={16}>Mask Crop</FlatButton></Stack>
                        <Row $pad="0 0 0 6px"><CheckRow $h={8} $gap={2}><Tick type="checkbox" defaultChecked />Delete Mask</CheckRow></Row>
                        <Row $pad="8px 0 0 11px" $gap={1}><span>Pad:</span><NumberField aria-label="Pad" defaultValue="0" $w={12} /><Row $pad="0 0 0 5px">px</Row></Row>
                        <Row $pad="21px 0 0 12px"><button>?</button></Row>
                    </Stack>
                    <Stack $pad="0 3px">
                        <Stack><span>Pr</span><span>Co</span><span>Co</span></Stack>
                        <Stack $pad="6px 0"><span>Pix</span><span>Pix</span><span>Pix</span><span>Pix</span></Stack>
                        <span>Ne</span><span>Ne</span>
                    </Stack>
                </AutoCropBody>
            </Floating>

            <Floating $x={869} $y={99} $w={107} $h={172}>
                <FloatTitle><FloatClose aria-label="Close ShiftLayers" /></FloatTitle>
                <Row $h={16} $gap={6} $pad="0 6px">pt_ShiftLayers<Glyph name="menu" size={5} /></Row>
                <Stack $pad="2px 5px">
                    <Drop label="Layers" value="Shift Selected Layers" w={81} h={14} solid />
                    <CheckRow $h={15} $gap={2}><Tick type="checkbox" $s={6} />First in point to time marker</CheckRow>
                    <CheckRow $h={15} $gap={2}><Tick type="checkbox" $s={6} />Last out point to time marker</CheckRow>
                    <Row $gap={7} $h={19}>
                        <CheckRow $gap={2}><Tick type="radio" $s={6} defaultChecked />Shift</CheckRow>
                        <NumberField aria-label="Shift by" defaultValue="10" /><Drop label="Unit" value="frames" w={40} h={12} solid />
                    </Row>
                    <Row $gap={9} $pad="3px 0 0 27px"><FlatButton $w={14} $h={13}>?</FlatButton><FlatButton $w={38} $h={13}>Apply</FlatButton></Row>
                </Stack>
            </Floating>

            <Overlay width="600" height="440" viewBox="0 0 600 440">
                <path d="M296 166L300 176L298 176L285.5 271L284.5 271L293.5 175L291 175Z" fill="#f23c3f" />
                <path d="M467 392L461 399L460 396L378 441L374 441L458 394L457 392Z" fill="#f23c3f" />
            </Overlay>
        </Page>
    )
}
